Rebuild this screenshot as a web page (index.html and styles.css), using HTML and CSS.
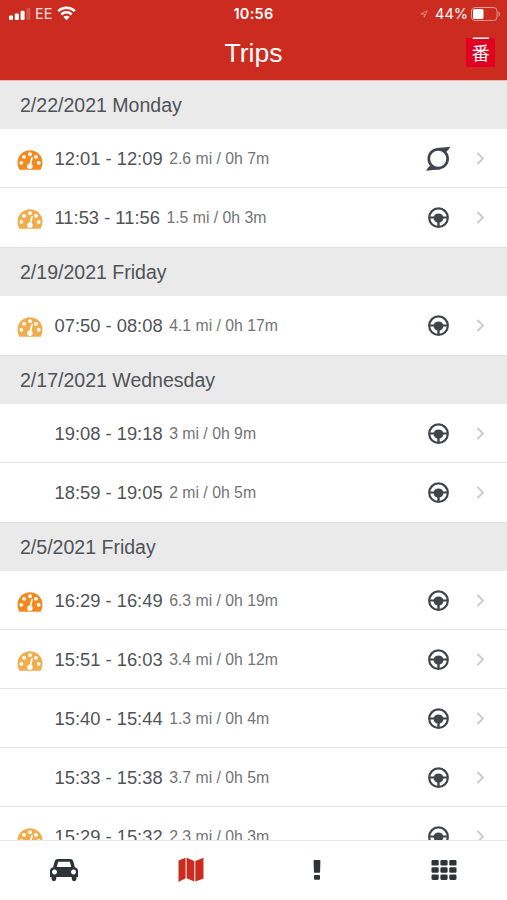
FILE: index.html
```
<!doctype html>
<html lang="en">
  <head>
    <meta charset="UTF-8" />
    <meta name="viewport" content="width=device-width, initial-scale=1.0" />
    <title>Trips</title>
    <link rel="stylesheet" href="styles.css">
  </head>
  <body>
    <header class="header">
      <div class="status">
        <div class="carrier">
          <svg width="22" height="12" viewBox="0 0 22 12" fill="#fff">
            <rect x="0" y="7.5" width="4" height="4.5" rx="1" />
            <rect x="5.8" y="5.5" width="4" height="6.5" rx="1" />
            <rect x="11.6" y="2.8" width="4" height="9.2" rx="1" />
            <rect x="17.4" y="0" width="4" height="12" rx="1" opacity=".2" />
          </svg>
          <span>EE</span>
          <svg width="19" height="15" viewBox="0 0 19 15" fill="none" stroke="#fff" stroke-width="2.5">
            <path d="M1.2 5.2a11.8 11.8 0 0 1 16.6 0" />
            <path d="M4.3 8.5a7.4 7.4 0 0 1 10.4 0" />
            <path d="M9.5 14.3L6.4 11.1a4.4 4.4 0 0 1 6.2 0z" fill="#fff" stroke="none" />
          </svg>
        </div>
        <div class="clock">10:56</div>
        <div class="power">
          <svg class="location" width="8" height="8" viewBox="0 0 8 8" fill="none" stroke="#fff" stroke-width=".8">
            <path d="M.8 4L7.2.8 4.2 7.2V4z" />
          </svg>
          <span>44%</span>
          <svg width="30" height="14" viewBox="0 0 30 14">
            <rect x=".5" y=".5" width="25.5" height="13" rx="3.5" fill="none" stroke="#fff" stroke-opacity=".5" />
            <rect x="2" y="2" width="10.5" height="10" rx="1.5" fill="#fff" />
            <path d="M27.5 4.5c1.8.6 1.8 4.4 0 5z" fill="#fff" opacity=".5" />
          </svg>
        </div>
      </div>
      <div class="title-bar">
        <h1>Trips</h1>
        <svg class="badge" width="30" height="31" viewBox="0 0 30 31">
          <rect x="0" y="1" width="29" height="29" fill="#e1001f" />
          <path d="M7 .6h16v1.5H6.5z" fill="#fff" />
          <text x="14.7" y="23" text-anchor="middle" class="badge-text">番</text>
        </svg>
      </div>
    </header>

    <main class="trips" id="trips"></main>

    <nav class="tabs">
      <a class="tab">
        <svg width="30" height="24" viewBox="0 0 30 24">
          <path fill-rule="evenodd" d="M8.700 1h12.600q2.400 0 3 2.200l1.600 6q3.100.8 3.100 3.800v6h-1.500v1.800a2.400 2.400 0 0 1-4.800 0V19H7.300v1.800a2.400 2.400 0 0 1-4.800 0V19H1v-6q0-3 3.100-3.800l1.600-6Q6.300 1 8.700 1zM9.200 3.800L7.700 9h14.600l-1.500-5.200zM5.500 11.500a2.500 2.500 0 1 0 .01 0zM24.500 11.500a2.500 2.500 0 1 0 .01 0z" />
        </svg>
      </a>
      <a class="tab active">
        <svg width="26" height="26" viewBox="0 0 26 26">
          <path d="M.5 3.500L7.600.8v20.500L.5 25zM8.600.8l7.700 3.300v20.500l-7.700-3.300zM17.300 4.100L25.500.8v20.700l-8.200 3.100z" />
        </svg>
      </a>
      <a class="tab">
        <svg width="8" height="22" viewBox="0 0 8 22">
          <path d="M1.500 1h5q.9 0 .9.900l-.3 11q0 .8-.8.800H1.700q-.8 0-.8-.800l-.3-11q0-.9.900-.900z" />
          <rect x="1" y="16" width="6" height="4.700" rx="1" />
        </svg>
      </a>
      <a class="tab">
        <svg width="26" height="22" viewBox="0 0 26 22">
          <rect x=".5" y="1" width="7.200" height="5.500" rx="1.300" />
          <rect x="9.400" y="1" width="7.200" height="5.500" rx="1.300" />
          <rect x="18.300" y="1" width="7.200" height="5.500" rx="1.300" />
          <rect x=".5" y="8.200" width="7.200" height="5.500" rx="1.300" />
          <rect x="9.400" y="8.200" width="7.200" height="5.500" rx="1.300" />
          <rect x="18.300" y="8.200" width="7.200" height="5.500" rx="1.300" />
          <rect x=".5" y="15.400" width="7.200" height="5.500" rx="1.300" />
          <rect x="9.400" y="15.400" width="7.200" height="5.500" rx="1.300" />
          <rect x="18.300" y="15.400" width="7.200" height="5.500" rx="1.300" />
        </svg>
      </a>
    </nav>

    <svg class="sprite" width="0" height="0">
      <defs>
        <symbol id="gauge" viewBox="0 0 26 20">
          <path d="M2.300 19.800Q.5 16.500.5 12.700a12.500 12.500 0 0 1 25 0q0 3.800-1.800 7.100z" fill="currentColor" />
          <g fill="#fff">
            <circle cx="4.300" cy="12.800" r="1.900" />
            <circle cx="7" cy="6.800" r="1.900" />
            <circle cx="13" cy="4.200" r="1.900" />
            <circle cx="19" cy="6.800" r="1.900" />
            <circle cx="21.700" cy="12.800" r="1.900" />
            <circle cx="12.900" cy="16.200" r="2.700" />
          </g>
          <path d="M13.100 15.500l1.900-7.700" stroke="#fff" stroke-width="1.700" stroke-linecap="round" />
        </symbol>
        <symbol id="wheel" viewBox="0 0 26 26">
          <circle cx="13.500" cy="12.700" r="9.300" fill="none" stroke="currentColor" stroke-width="2.200" />
          <path d="M4.500 11.600h4.200q1.300-3.200 4.800-3.200t4.800 3.200h4.200v2h-4.100q-.5 3.200-3.700 4v4.100h-2.400v-4.100q-3.200-.8-3.700-4H4.500z" fill="currentColor" />
        </symbol>
        <symbol id="loop" viewBox="0 0 26 26">
          <circle cx="13.200" cy="12.700" r="9.400" fill="none" stroke="currentColor" stroke-width="2.700" />
          <path d="M11 2.100q3.500-.6 7-.6L25.300.7q-1 2.500-4.100 5.200l-3-1.700zM15.400 23.300q-3.500.6-7 .6l-7.300.8q1-2.500 4.100-5.200l3 1.700z" fill="currentColor" />
        </symbol>
      </defs>
    </svg>

    <script>
      // level: "high" / "mid" speed marker, empty for none
      const days = [
        { date: "2/22/2021 Monday", trips: [
          { time: "12:01 - 12:09", info: "2.6 mi / 0h 7m", level: "high", icon: "loop" },
          { time: "11:53 - 11:56", info: "1.5 mi / 0h 3m", level: "mid" },
        ] },
        { date: "2/19/2021 Friday", trips: [
          { time: "07:50 - 08:08", info: "4.1 mi / 0h 17m", level: "mid" },
        ] },
        { date: "2/17/2021 Wednesday", trips: [
          { time: "19:08 - 19:18", info: "3 mi / 0h 9m" },
          { time: "18:59 - 19:05", info: "2 mi / 0h 5m" },
        ] },
        { date: "2/5/2021 Friday", trips: [
          { time: "16:29 - 16:49", info: "6.3 mi / 0h 19m", level: "high" },
          { time: "15:51 - 16:03", info: "3.4 mi / 0h 12m", level: "mid" },
          { time: "15:40 - 15:44", info: "1.3 mi / 0h 4m" },
          { time: "15:33 - 15:38", info: "3.7 mi / 0h 5m" },
          { time: "15:29 - 15:32", info: "2.3 mi / 0h 3m", level: "mid" },
        ] },
      ];

      function tripRow(t) {
        const gauge = t.level ? `<svg class="gauge ${t.level}"><use href="#gauge" /></svg>` : "";
        return `
          <div class="trip">
            <div class="marker">${gauge}</div>
            <span class="time">${t.time}</span>
            <span class="info">${t.info}</span>
            <svg class="mode"><use href="#${t.icon || "wheel"}" /></svg>
            <svg class="chevron" viewBox="0 0 9 13"><path d="M1.500 1l5.500 5.500L1.500 12" /></svg>
          </div>`;
      }

      document.getElementById("trips").innerHTML = days
        .map(d => `<section><h2>${d.date}</h2>${d.trips.map(tripRow).join("")}</section>`)
        .join("");
    </script>
  </body>
</html>
```
FILE: styles.css
```
* {
  box-sizing: border-box;
}
body {
  margin: 0;
  height: 100vh;
  display: flex;
  flex-direction: column;
  overflow: hidden;
  background: #fff;
  color: #505358;
  font-family: "Liberation Sans", Arial, sans-serif;
}
svg {
  display: block;
  flex: none;
}
.header {
  flex: none;
  height: 80px;
  background: #cb2c1f;
  color: #fff;
}
.status {
  display: grid;
  grid-template-columns: 1fr auto 1fr;
  align-items: center;
  height: 27px;
  padding: 0 6px 0 9px;
  font-family: Inter, sans-serif;
  font-size: 14.5px;
}
.carrier,
.power {
  display: flex;
  align-items: center;
}
.carrier span {
  margin: 0 5px 0 4px;
  opacity: .85;
}
.clock {
  margin-right: 3px;
  font-weight: 600;
  letter-spacing: .3px;
}
.power {
  justify-content: flex-end;
}
.power span {
  margin: 0 3px 0 7px;
}
.location {
  opacity: .5;
}
.title-bar {
  display: grid;
  grid-template-columns: 1fr auto 1fr;
  align-items: center;
  height: 52px;
  padding: 0 11px;
}
.title-bar h1 {
  grid-column: 2;
  margin: 0;
  font-size: 26.5px;
  font-weight: normal;
}
.badge {
  justify-self: end;
  margin-top: -2px;
}
.badge-text {
  fill: #fff;
  font: 18px "Noto Sans CJK JP", sans-serif;
}
.trips {
  flex: 1;
  min-height: 0;
  overflow: hidden;
}
.trips h2 {
  display: flex;
  align-items: center;
  height: 49px;
  margin: 0;
  padding: 0 20px;
  background: #eaeaea;
  border-top: 1px solid #e0e0e0;
  font-size: 19.55px;
  font-weight: normal;
}
.trips section:first-child h2 {
  border-top-color: #f3b9b5;
}
.trip {
  display: flex;
  align-items: center;
  height: 59px;
  padding: 1px 22px 0 17px;
  border-bottom: 1px solid #e6e6e6;
}
.trip:last-child {
  border-bottom-color: transparent;
}
.marker {
  width: 37.5px;
  padding: 2px 0 0;
}
.gauge {
  width: 26px;
  height: 20px;
}
.gauge.high {
  color: #f28a20;
}
.gauge.mid {
  color: #f0ad4e;
}
.time {
  margin-right: 6.5px;
  font-size: 18.35px;
}
.info {
  flex: 1;
  padding-top: 1px;
  color: #737476;
  font-size: 15.8px;
}
.mode {
  width: 26px;
  height: 26px;
  margin-right: 25px;
  color: #41454b;
}
.chevron {
  width: 9px;
  height: 13px;
  fill: none;
  stroke: #cbcbcb;
  stroke-width: 1.8;
}
.tabs {
  display: grid;
  grid-template-columns: repeat(4, 1fr);
  flex: none;
  height: 60px;
  padding: 0 0 2px 1px;
  border-top: 1px solid #e8e8e8;
  background: #fff;
}
.tab {
  display: flex;
  align-items: center;
  justify-content: center;
  fill: #2e3337;
}
.tab.active {
  fill: #cb2c1f;
}
.sprite {
  position: absolute;
}
```
